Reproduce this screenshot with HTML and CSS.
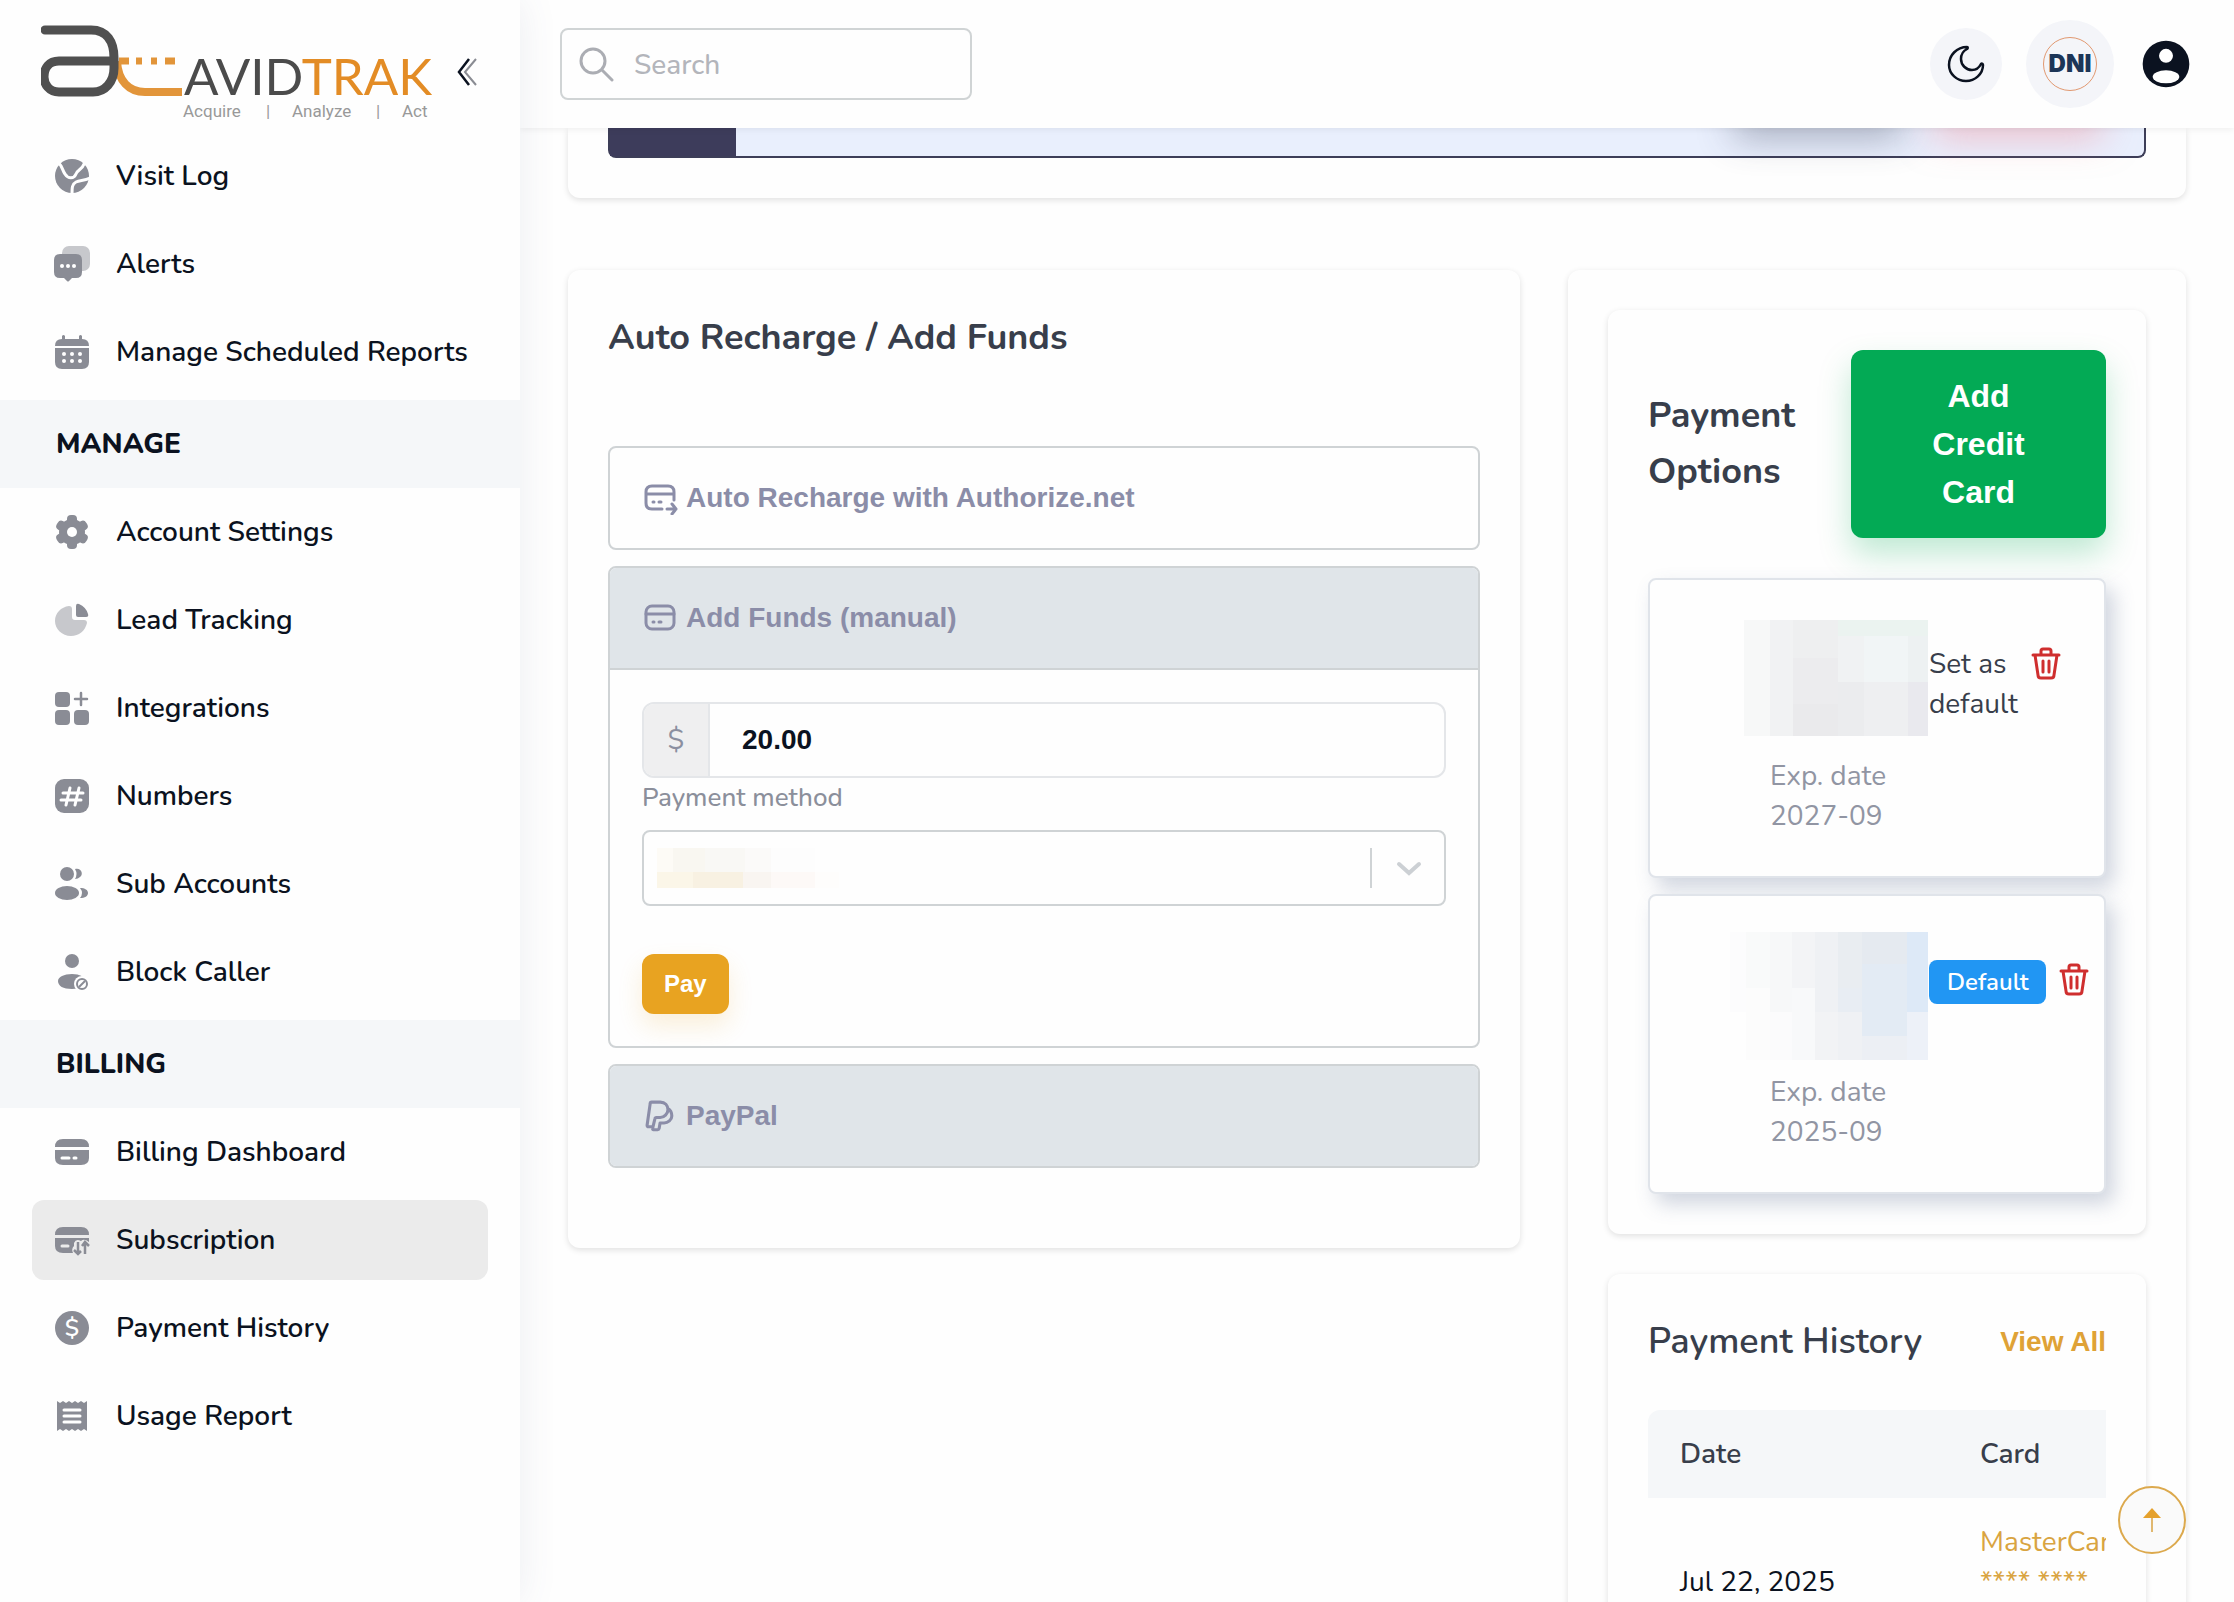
FILE: index.html
```html
<!DOCTYPE html>
<html lang="en">
<head>
  <meta charset="UTF-8">
  <meta name="viewport" content="width=device-width, initial-scale=1">
  <title>AvidTrak - Subscription</title>
  <link rel="stylesheet" href="styles.css">
</head>
<body>
  <div class="layout">
    <aside class="sidebar">
      <div class="brand">
        <a href="#" class="logo" aria-label="AvidTrak">
          <svg width="400" height="104" viewBox="0 0 400 104">
            <path class="logo-orange" d="M76 41 C77 61 88 72 104 72 H141" />
            <path class="logo-orange logo-dots" d="M78 41 H88 M95 41 H101 M110 41 H116 M124 41 H134" />
            <path class="logo-dark" d="M4 10 H50 C66 10 73 22 73 38 V48 C73 62 64 72 52 72 H18 C8 72 3 64 3 57 C3 48 8 41 18 41 H73" />
            <text class="logo-name" x="143" y="75">AVID<tspan class="logo-name-alt">TRAK</tspan></text>
            <text class="logo-tag" x="142" y="97">Acquire</text>
            <text class="logo-tag" x="225" y="97">|</text>
            <text class="logo-tag" x="251" y="97">Analyze</text>
            <text class="logo-tag" x="335" y="97">|</text>
            <text class="logo-tag" x="361" y="97">Act</text>
          </svg>
        </a>
        <button type="button" class="collapse" aria-label="Collapse menu">
          <svg width="20" height="28" viewBox="0 0 20 28" fill="none" stroke-width="2">
            <path d="M19 1 L8 14 L19 27" stroke="#8a8c93" />
            <path d="M12 1 L2 14 L12 27" stroke="#0b1220" stroke-width="2.500" />
          </svg>
        </button>
      </div>

      <nav>
        <ul class="menu">
          <li><a href="#">
            <svg class="icon" viewBox="0 0 36 36"><circle cx="18" cy="18" r="17" /><path class="cut" d="M4 4 C9 9 8 12 11 16 C14 21 20 21 22 16 C23 12 28 12 30 6 M36 20 C30 23 26 22 22 24 C18 26 18 30 18 36" /></svg>
            Visit Log</a></li>
          <li><a href="#">
            <svg class="icon" viewBox="0 0 36 36"><rect class="soft" x="8" y="0" width="28" height="25" rx="7" /><path d="M6 8 H22 Q28 8 28 14 V26 Q28 32 22 32 H18 L15 35 Q14 36 13 35 L10 32 H6 Q0 32 0 26 V14 Q0 8 6 8 Z" /><g fill="#fff"><circle cx="8" cy="20" r="2" /><circle cx="14" cy="20" r="2" /><circle cx="20" cy="20" r="2" /></g></svg>
            Alerts</a></li>
          <li><a href="#">
            <svg class="icon" viewBox="0 0 36 36"><path d="M1 12 Q1 5 8 5 V2 Q9.500 0 11 2 V5 H25 V2 Q26.500 0 28 2 V5 Q35 5 35 12 Z M1 14 H35 V28 Q35 35 28 35 H8 Q1 35 1 28 Z" /><g fill="#fff"><circle cx="10" cy="20" r="2" /><circle cx="18" cy="20" r="2" /><circle cx="26" cy="20" r="2" /><circle cx="10" cy="27" r="2" /><circle cx="18" cy="27" r="2" /><circle cx="26" cy="27" r="2" /></g></svg>
            Manage Scheduled Reports</a></li>
        </ul>

        <h2 class="menu-title">MANAGE</h2>
        <ul class="menu">
          <li><a href="#">
            <svg class="icon" viewBox="0 0 36 36"><circle cx="18" cy="18" r="13" /><g><rect x="13" y="1" width="10" height="34" rx="4" /><rect x="13" y="1" width="10" height="34" rx="4" transform="rotate(60 18 18)" /><rect x="13" y="1" width="10" height="34" rx="4" transform="rotate(120 18 18)" /></g><circle cx="18" cy="18" r="5" fill="#fff" /></svg>
            Account Settings</a></li>
          <li><a href="#">
            <svg class="icon" viewBox="0 0 36 36"><path class="soft" d="M15 4 Q18 4 18 7 V15 Q18 18 21 18 H30 Q33 18 33 21 C31 29 25 34 17 34 C8 34 1 27 1 19 C1 11 7 5 15 4 Z" /><path d="M22 4 Q22 1 25 2 Q32 5 34 12 Q35 15 32 15 H24 Q22 15 22 13 Z" /></svg>
            Lead Tracking</a></li>
          <li><a href="#">
            <svg class="icon" viewBox="0 0 36 36"><rect x="1" y="2" width="15" height="15" rx="4" /><rect x="1" y="20" width="15" height="15" rx="4" /><rect x="20" y="20" width="15" height="15" rx="4" /><path d="M27 3 V15 M21 9 H33" stroke="#8a8c95" stroke-width="2.500" stroke-linecap="round" /></svg>
            Integrations</a></li>
          <li><a href="#">
            <svg class="icon" viewBox="0 0 36 36"><rect x="1" y="1" width="34" height="34" rx="9" /><path class="cut" d="M16 10 L12 27 M25 10 L21 27 M9 15 H29 M7 22 H27" /></svg>
            Numbers</a></li>
          <li><a href="#">
            <svg class="icon" viewBox="0 0 36 36"><circle cx="13" cy="8" r="7" /><ellipse cx="13" cy="27" rx="12" ry="7" /><path d="M21 3 C27 1 30 8 26 11 Q24 13 21 13 Q24 8 21 3 Z M26 22 C31 22 34 24 34 27 C34 30 31 32 26 32 Q30 27 26 22 Z" /></svg>
            Sub Accounts</a></li>
          <li><a href="#">
            <svg class="icon" viewBox="0 0 36 36"><circle cx="18" cy="7" r="7" /><path d="M18 20 C26 20 31 23 31 27 C31 32 27 35 18 35 C9 35 4 32 4 27 C4 23 10 20 18 20 Z" /><circle cx="28" cy="30" r="8" fill="#fff" /><circle cx="28" cy="30" r="5" fill="none" stroke="#8a8c95" stroke-width="2" /><path d="M25 33 L31 27" stroke="#8a8c95" stroke-width="2" /></svg>
            Block Caller</a></li>
        </ul>

        <h2 class="menu-title">BILLING</h2>
        <ul class="menu">
          <li><a href="#">
            <svg class="icon" viewBox="0 0 36 36"><path d="M1 13 Q1 5 9 5 H27 Q35 5 35 13 Z M1 16 H35 V24 Q35 31 27 31 H9 Q1 31 1 24 Z" /><path class="cut" d="M8 24 H15 M20 24 H22" /></svg>
            Billing Dashboard</a></li>
          <li><a href="#" class="active">
            <svg class="icon" viewBox="0 0 36 36"><path d="M1 13 Q1 5 9 5 H27 Q35 5 35 13 Z M1 16 H35 V20 Q30 16 27 19 Q22 16 20 21 V24 Q17 27 19 31 H9 Q1 31 1 24 Z" /><path class="cut cut-active" d="M8 24 H14" /><path d="M24 20 V31 M20 28 L24 32 L27 29 M31 32 V21 M28 24 L31 20 L35 24" fill="none" stroke="#8a8c95" stroke-width="2.500" /></svg>
            Subscription</a></li>
          <li><a href="#">
            <svg class="icon" viewBox="0 0 36 36"><circle cx="18" cy="18" r="17" /><text class="icon-text" x="18" y="26" text-anchor="middle">$</text></svg>
            Payment History</a></li>
          <li><a href="#">
            <svg class="icon" viewBox="0 0 36 36"><path d="M3 3 L6 5 L9 3 L12 5 L15 3 L18 5 L21 3 L24 5 L27 3 L30 5 L33 3 V33 L30 31 L27 33 L24 31 L21 33 L18 31 L15 33 L12 31 L9 33 L6 31 L3 33 Z" /><path class="cut" d="M10 12 H26 M10 18 H26 M10 24 H26" /></svg>
            Usage Report</a></li>
        </ul>
      </nav>
    </aside>

    <div class="page">
      <header class="topbar">
        <label class="search">
          <svg width="36" height="36" viewBox="0 0 36 36" fill="none" stroke="#abadb3" stroke-width="3" stroke-linecap="round"><circle cx="15" cy="15" r="12" /><path d="M24 24 L34 34" /></svg>
          <input type="search" placeholder="Search" aria-label="Search">
        </label>
        <div class="tools">
          <button type="button" class="round" aria-label="Dark mode">
            <svg width="40" height="40" viewBox="0 0 40 40" fill="none" stroke="#0b1220" stroke-width="2.500" stroke-linejoin="round"><path d="M21 3 C11 3 3 11 3 21 C3 30 11 37 20 37 C29 37 37 30 37 21 C37 20 36 19 35 20 C33 24 30 26 26 26 C20 26 15 21 15 15 C15 10 17 7 21 5 C22 4 22 3 21 3 Z" /></svg>
          </button>
          <button type="button" class="round round-lg"><span class="dni">DNI</span></button>
          <button type="button" class="user" aria-label="Account">
            <svg width="56" height="56" viewBox="0 0 24 24"><circle cx="12" cy="12" r="10" fill="#0b1220" /><circle cx="12" cy="8.500" r="3" fill="#fff" /><ellipse cx="12" cy="17.500" rx="5.700" ry="2.800" fill="#fff" /></svg>
          </button>
        </div>
      </header>

      <main class="content">
        <section class="card card-top">
          <div class="plan">
            <div class="plan-side"></div>
            <div class="plan-actions">
              <span class="glow glow-dark"></span>
              <span class="glow glow-red"></span>
            </div>
          </div>
        </section>

        <div class="columns">
          <section class="card funds">
            <h3>Auto Recharge / Add Funds</h3>
            <div class="accordion">
              <div class="panel">
                <button type="button" class="panel-head">
                  <svg width="34" height="34" viewBox="0 0 34 34"><path d="M18 28 H8 Q2 28 2 22 V11 Q2 5 8 5 H24 Q30 5 30 11 V19 M2 13 H30 M9 21 H10 M15 21 H17 M23 28 H32 M28 23 L32 28 L28 33" /></svg>
                  Auto Recharge with Authorize.net
                </button>
              </div>
              <div class="panel">
                <button type="button" class="panel-head shaded">
                  <svg width="34" height="34" viewBox="0 0 34 34"><rect x="2" y="5" width="28" height="23" rx="6" /><path d="M2 13 H30 M9 21 H10 M15 21 H17" /></svg>
                  Add Funds (manual)
                </button>
                <form class="panel-body">
                  <div class="amount">
                    <label for="amount">$</label>
                    <input type="text" id="amount" value="20.00">
                  </div>
                  <label for="method" class="field-label">Payment method</label>
                  <div class="select-wrap">
                    <select id="method"><option></option></select>
                    <svg class="mask mask-method" width="240" height="40" viewBox="0 0 240 40" shape-rendering="crispEdges">
                      <rect width="16" height="24" fill="#fdfbf6" /><rect x="16" width="32" height="24" fill="#f9f7f1" /><rect x="48" width="40" height="24" fill="#f9f8f5" /><rect x="88" width="26" height="24" fill="#fbfaf9" /><rect x="114" width="44" height="24" fill="#fdfdfd" />
                      <rect y="24" width="36" height="16" fill="#fbf6e8" /><rect x="36" y="24" width="50" height="16" fill="#f8f1e2" /><rect x="86" y="24" width="28" height="16" fill="#f9f5f1" /><rect x="114" y="24" width="44" height="16" fill="#fdf9f7" /><rect x="158" y="24" width="24" height="16" fill="#fefdfc" />
                    </svg>
                    <svg class="caret" width="28" height="40" viewBox="0 0 28 40"><path d="M4 16 L14 25 L24 16" fill="none" stroke="#ccd0d4" stroke-width="4" stroke-linecap="round" /></svg>
                  </div>
                  <button type="submit" class="btn-pay">Pay</button>
                </form>
              </div>
              <div class="panel">
                <button type="button" class="panel-head shaded">
                  <svg class="thin" width="34" height="34" viewBox="2 1 22 22"><path d="M10 13h2.500c2.500 0 5-2.500 5-5c0-3-1.900-5-5-5h-5.500c-.5 0-1 .5-1 1l-2 14c0 .5.5 1 1 1h2.800l1.200-5c.1-.6.4-1 1-1z M17.500 7.200c1.700 1 2.500 2.800 2.500 4.800c0 2.500-2.500 4.500-5 4.500h-2.600l-.6 3.600a1 1 0 0 1-1 .8h-2.700a.5.5 0 0 1-.5-.6l.2-1.400" /></svg>
                  PayPal
                </button>
              </div>
            </div>
          </section>

          <section class="card side">
            <div class="card">
              <div class="card-head">
                <h3>Payment Options</h3>
                <button type="button" class="btn-add">Add Credit Card</button>
              </div>
              <div class="credit-list">
                <div class="credit">
                  <svg class="mask" width="184" height="116" viewBox="0 0 184 116" shape-rendering="crispEdges">
                    <rect width="184" height="116" fill="#f0f1f3" />
                    <rect width="26" height="116" fill="#f7f8f8" /><rect x="26" width="23" height="116" fill="#f1f2f3" /><rect x="49" width="45" height="38" fill="#eeeff0" /><rect x="49" y="38" width="45" height="46" fill="#ececee" /><rect x="49" y="84" width="45" height="32" fill="#eaeaec" /><rect x="94" width="90" height="16" fill="#ebf3f0" /><rect x="94" y="16" width="26" height="46" fill="#f0f2f3" /><rect x="120" y="16" width="44" height="46" fill="#f1f5f6" /><rect x="164" y="16" width="20" height="46" fill="#edf1f2" /><rect x="94" y="62" width="26" height="54" fill="#ebecee" /><rect x="120" y="62" width="44" height="54" fill="#eeeff1" /><rect x="164" y="62" width="20" height="54" fill="#e9e9ee" />
                  </svg>
                  <button type="button" class="set-default">Set as default</button>
                  <button type="button" class="trash" aria-label="Delete card">
                    <svg width="32" height="34" viewBox="0 0 32 34"><path d="M3 9 H29 M5 9 L8 29 Q8 32 11 32 H21 Q24 32 24 29 L27 9 M11 9 V5 Q11 3 13 3 H19 Q21 3 21 5 V9 M13 15 V26 M19 15 V26" /></svg>
                  </button>
                  <p class="exp">Exp. date<br>2027-09</p>
                </div>
                <div class="credit credit-main">
                  <svg class="mask" width="198" height="128" viewBox="0 0 198 128" shape-rendering="crispEdges">
                    <rect width="16" height="80" fill="#fcfcfd" /><rect x="16" width="24" height="56" fill="#f9fafa" /><rect x="16" y="56" width="24" height="72" fill="#fcfcfc" /><rect x="40" width="22" height="80" fill="#f7f8f9" /><rect x="40" y="80" width="22" height="48" fill="#fbfbfc" /><rect x="62" width="23" height="56" fill="#f3f4f6" /><rect x="62" y="56" width="23" height="72" fill="#f8f9fa" /><rect x="85" width="23" height="80" fill="#eff1f4" /><rect x="85" y="80" width="23" height="48" fill="#f2f3f5" /><rect x="108" width="24" height="56" fill="#e9edf1" /><rect x="108" y="56" width="24" height="24" fill="#e8edf3" /><rect x="108" y="80" width="24" height="48" fill="#eff1f4" /><rect x="132" width="45" height="32" fill="#e5eaf0" /><rect x="132" y="32" width="45" height="72" fill="#e3ebf4" /><rect x="132" y="104" width="45" height="24" fill="#eceff4" /><rect x="177" width="21" height="80" fill="#dde9f7" /><rect x="177" y="80" width="21" height="48" fill="#edf1f8" />
                  </svg>
                  <span class="badge">Default</span>
                  <button type="button" class="trash" aria-label="Delete card">
                    <svg width="32" height="34" viewBox="0 0 32 34"><path d="M3 9 H29 M5 9 L8 29 Q8 32 11 32 H21 Q24 32 24 29 L27 9 M11 9 V5 Q11 3 13 3 H19 Q21 3 21 5 V9 M13 15 V26 M19 15 V26" /></svg>
                  </button>
                  <p class="exp">Exp. date<br>2025-09</p>
                </div>
              </div>
            </div>

            <div class="card">
              <div class="card-head">
                <h4>Payment History</h4>
                <a href="#" class="view-all">View All</a>
              </div>
              <div class="table-wrap">
                <table>
                  <thead>
                    <tr><th>Date</th><th>Card</th></tr>
                  </thead>
                  <tbody>
                    <tr><td>Jul 22, 2025</td><td class="gold">MasterCard<br>**** ****</td></tr>
                  </tbody>
                </table>
              </div>
            </div>
          </section>
        </div>
      </main>
    </div>
  </div>

  <a href="#" class="to-top" aria-label="Back to top">
    <svg width="24" height="28" viewBox="0 0 24 28"><path d="M12 2 L21 12 H3 Z" fill="#e5a12c" /><path d="M12 12 V26" stroke="#e0b870" stroke-width="2" /></svg>
  </a>
</body>
</html>
```
FILE: styles.css
```css
* {
  box-sizing: border-box;
}
body {
  margin: 0;
  font-family: "Nunito", "Lato", sans-serif;
  font-size: 28px;
  line-height: 40px;
  color: #0b1220;
  background: #fefefe;
}
h2, h3, h4, p, ul {
  margin: 0;
  padding: 0;
  font-weight: 400;
}
ul {
  list-style: none;
}
a {
  color: inherit;
  text-decoration: none;
}
button, input, select {
  font: inherit;
  color: inherit;
  border: none;
  background: none;
  padding: 0;
}
button {
  cursor: pointer;
}
svg {
  display: block;
  flex: none;
}
.layout {
  display: grid;
  grid-template-columns: 520px 1fr;
  height: 100vh;
  overflow: hidden;
}

/* sidebar */
.sidebar {
  position: relative;
  z-index: 3;
  background: #fefefe;
  box-shadow: 0 0 36px rgba(76, 87, 125, 0.1);
}
.brand {
  display: flex;
  align-items: center;
  gap: 16px;
  height: 132px;
  padding: 12px 0 0 41px;
}
.logo-orange {
  fill: none;
  stroke: #e2953a;
  stroke-width: 8;
}
.logo-orange.logo-dots {
  stroke-width: 7;
}
.logo-dark {
  fill: none;
  stroke: #505050;
  stroke-width: 9;
  stroke-linecap: round;
}
.logo-name {
  font-family: Lato, sans-serif;
  font-size: 51px;
  font-weight: 400;
  fill: #4b4b4b;
}
.logo-name-alt {
  fill: #e38c25;
}
.logo-tag {
  font-family: Roboto, sans-serif;
  font-size: 17px;
  fill: #999;
}
.menu {
  padding: 0 32px 4px;
}
.menu li {
  padding: 4px 0;
}
.menu a {
  display: flex;
  align-items: center;
  gap: 26px;
  height: 80px;
  padding-left: 22px;
  border-radius: 12px;
  font-weight: 600;
}
.menu a.active {
  background: #ebebeb;
}
.menu-title {
  padding: 24px 56px;
  background: #f5f7f9;
  font-size: 28px;
  font-weight: 800;
}
.icon {
  width: 36px;
  height: 36px;
  fill: #8a8c95;
}
.icon .soft {
  fill: #c7c8cc;
}
.icon .cut {
  fill: none;
  stroke: #fff;
  stroke-width: 3;
  stroke-linecap: round;
}
.icon .cut-active {
  stroke: #ebebeb;
}
.icon-text {
  fill: #fff;
  font-size: 24px;
}

/* top bar */
.page {
  display: flex;
  flex-direction: column;
  min-width: 0;
  overflow: hidden;
}
.topbar {
  position: relative;
  z-index: 2;
  flex: none;
  display: flex;
  justify-content: space-between;
  align-items: center;
  height: 128px;
  padding: 0 40px;
  background: #fefefe;
  box-shadow: 0 2px 6px rgba(0, 0, 0, 0.06);
}
.search {
  display: flex;
  align-items: center;
  gap: 20px;
  width: 412px;
  height: 72px;
  padding: 0 16px;
  border: 2px solid #d0d4d5;
  border-radius: 8px;
}
.search input {
  flex: 1;
  min-width: 0;
  padding-top: 2px;
  outline: none;
}
.search input::placeholder {
  font-weight: 500;
  color: #b3b5bb;
}
.tools {
  display: flex;
  align-items: center;
  gap: 24px;
}
.round {
  display: flex;
  align-items: center;
  justify-content: center;
  width: 72px;
  height: 72px;
  border-radius: 50%;
  background: #f4f5f9;
}
.round-lg {
  width: 88px;
  height: 88px;
}
.dni {
  display: flex;
  align-items: center;
  justify-content: center;
  width: 54px;
  height: 54px;
  border: 1px solid #e19870;
  border-radius: 50%;
  font-family: Inter, sans-serif;
  font-size: 24px;
  font-weight: 900;
  color: #1c3557;
}

/* cards */
.content {
  flex: 1;
  min-height: 0;
  padding: 0 48px;
}
.card {
  padding: 40px;
  border-radius: 12px;
  background: #fefefe;
  box-shadow: 0 2px 6px rgba(0, 0, 0, 0.12);
}
.card-top {
  padding-top: 0;
  border-radius: 0 0 12px 12px;
}
.plan {
  display: flex;
  justify-content: space-between;
  height: 30px;
  border: 2px solid #3d3e58;
  border-top: none;
  border-radius: 0 0 8px 8px;
  background: #e9effd;
}
.plan-side {
  width: 126px;
  background: #3d3c5b;
}
.plan-actions {
  display: flex;
  gap: 60px;
  padding-right: 56px;
}
.glow {
  width: 140px;
  height: 0;
}
.glow-dark {
  box-shadow: 0 -6px 36px 14px rgba(60, 66, 90, 0.45);
}
.glow-red {
  box-shadow: 0 -6px 36px 14px rgba(245, 130, 140, 0.5);
}
.columns {
  display: grid;
  grid-template-columns: minmax(0, 952fr) minmax(0, 618fr);
  gap: 48px;
  align-items: start;
  margin-top: 72px;
}
h3 {
  font-size: 36px;
  line-height: 56px;
  font-weight: 700;
  color: #383e4b;
}
h4 {
  font-size: 36px;
  line-height: 56px;
  font-weight: 600;
  color: #383e4b;
}

/* add funds */
.funds {
  padding-bottom: 80px;
}
.accordion {
  display: flex;
  flex-direction: column;
  gap: 16px;
  margin-top: 80px;
}
.panel {
  border: 2px solid #cfd3d5;
  border-radius: 8px;
  overflow: hidden;
}
.panel-head {
  display: flex;
  align-items: center;
  gap: 8px;
  width: 100%;
  height: 100px;
  padding: 0 34px;
  font-family: "Liberation Sans", Arial, sans-serif;
  font-weight: 700;
  color: #8b8da8;
}
.panel-head.shaded {
  background: #e0e5e9;
}
.panel-head svg {
  fill: none;
  stroke: #8b8da8;
  stroke-width: 3;
  stroke-linecap: round;
  stroke-linejoin: round;
}
.panel-head svg.thin {
  stroke-width: 2;
}
.panel-body {
  display: flex;
  flex-direction: column;
  align-items: flex-start;
  padding: 32px;
  border-top: 2px solid #cfd3d5;
}
.amount {
  display: flex;
  width: 100%;
  height: 76px;
  border: 2px solid #e4e6e9;
  border-radius: 12px;
  overflow: hidden;
}
.amount label {
  display: flex;
  align-items: center;
  justify-content: center;
  width: 66px;
  border-right: 2px solid #e4e6e9;
  background: #efeff0;
  color: #8b8fa0;
}
.amount input {
  flex: 1;
  padding: 0 32px;
  font-family: "Liberation Sans", Arial, sans-serif;
  font-weight: 700;
}
.field-label {
  margin-bottom: 12px;
  font-size: 26px;
  font-weight: 500;
  color: #8b8f9b;
}
.select-wrap {
  position: relative;
  width: 100%;
}
.select-wrap select {
  display: block;
  width: 100%;
  height: 76px;
  border: 2px solid #cfd3d5;
  border-radius: 8px;
  appearance: none;
}
.mask-method {
  position: absolute;
  left: 15px;
  top: 18px;
  pointer-events: none;
}
.caret {
  position: absolute;
  right: 0;
  top: 18px;
  width: 76px;
  border-left: 2px solid #cfd3d5;
  pointer-events: none;
}
.btn-pay {
  height: 60px;
  margin-top: 48px;
  padding: 0 22px;
  border-radius: 12px;
  background: #e8a321;
  box-shadow: 0 12px 24px rgba(232, 163, 33, 0.16);
  font-family: "Liberation Sans", Arial, sans-serif;
  font-size: 24px;
  font-weight: 700;
  color: #fff;
}

/* payment options */
.side {
  display: flex;
  flex-direction: column;
  gap: 40px;
}
.card-head {
  display: flex;
  align-items: center;
  justify-content: space-between;
}
.btn-add {
  flex: 0 0 255px;
  padding: 22px 64px;
  border-radius: 12px;
  background: #03aa55;
  box-shadow: 0 16px 32px rgba(3, 170, 85, 0.25);
  font-family: "Liberation Sans", Arial, sans-serif;
  font-size: 32px;
  line-height: 48px;
  font-weight: 700;
  color: #fff;
}
.credit-list {
  display: flex;
  flex-direction: column;
  gap: 16px;
  margin-top: 40px;
}
.credit {
  display: grid;
  grid-template-columns: 278px 102px 32px;
  grid-template-rows: 136px 80px;
  justify-content: start;
  height: 300px;
  padding-top: 40px;
  border: 2px solid #e0e4ea;
  border-radius: 8px;
  background: #fefefe;
  box-shadow: 8px 10px 20px rgba(76, 95, 135, 0.26);
}
.credit .mask {
  justify-self: end;
}
.set-default {
  align-self: start;
  margin: 24px 0 0 1px;
  text-align: left;
  color: #383e4b;
}
.trash {
  align-self: start;
  margin-top: 26px;
}
.trash path {
  fill: none;
  stroke: #cf2e2e;
  stroke-width: 3;
  stroke-linecap: round;
  stroke-linejoin: round;
}
.exp {
  grid-column: 1 / -1;
  padding-left: 120px;
  color: #9195a3;
}
.credit-main {
  grid-template-columns: 278px 130px 32px;
  grid-template-rows: 140px 80px;
  padding-top: 36px;
}
.credit-main .trash {
  margin-top: 30px;
}
.badge {
  align-self: start;
  justify-self: start;
  margin: 28px 0 0 1px;
  padding: 2px 18px;
  border-radius: 8px;
  background: #2196f3;
  font-size: 24px;
  font-weight: 600;
  color: #fff;
}

/* payment history */
.view-all {
  font-family: "Liberation Sans", Arial, sans-serif;
  font-weight: 700;
  color: #dfa236;
}
.table-wrap {
  margin-top: 40px;
  border-radius: 12px 0 0 0;
  overflow: hidden;
}
table {
  width: 600px;
  table-layout: fixed;
  border-collapse: collapse;
}
th {
  height: 88px;
  padding: 0 32px;
  background: #f5f7f9;
  font-weight: 600;
  text-align: left;
  color: #383e4b;
}
td {
  padding: 24px 32px 0;
  vertical-align: bottom;
}
td.gold {
  color: #d9a441;
}
.to-top {
  position: fixed;
  right: 48px;
  bottom: 48px;
  z-index: 4;
  display: flex;
  align-items: center;
  justify-content: center;
  width: 68px;
  height: 68px;
  border: 2px solid #dca94d;
  border-radius: 50%;
  background: #fafafa;
}
```
